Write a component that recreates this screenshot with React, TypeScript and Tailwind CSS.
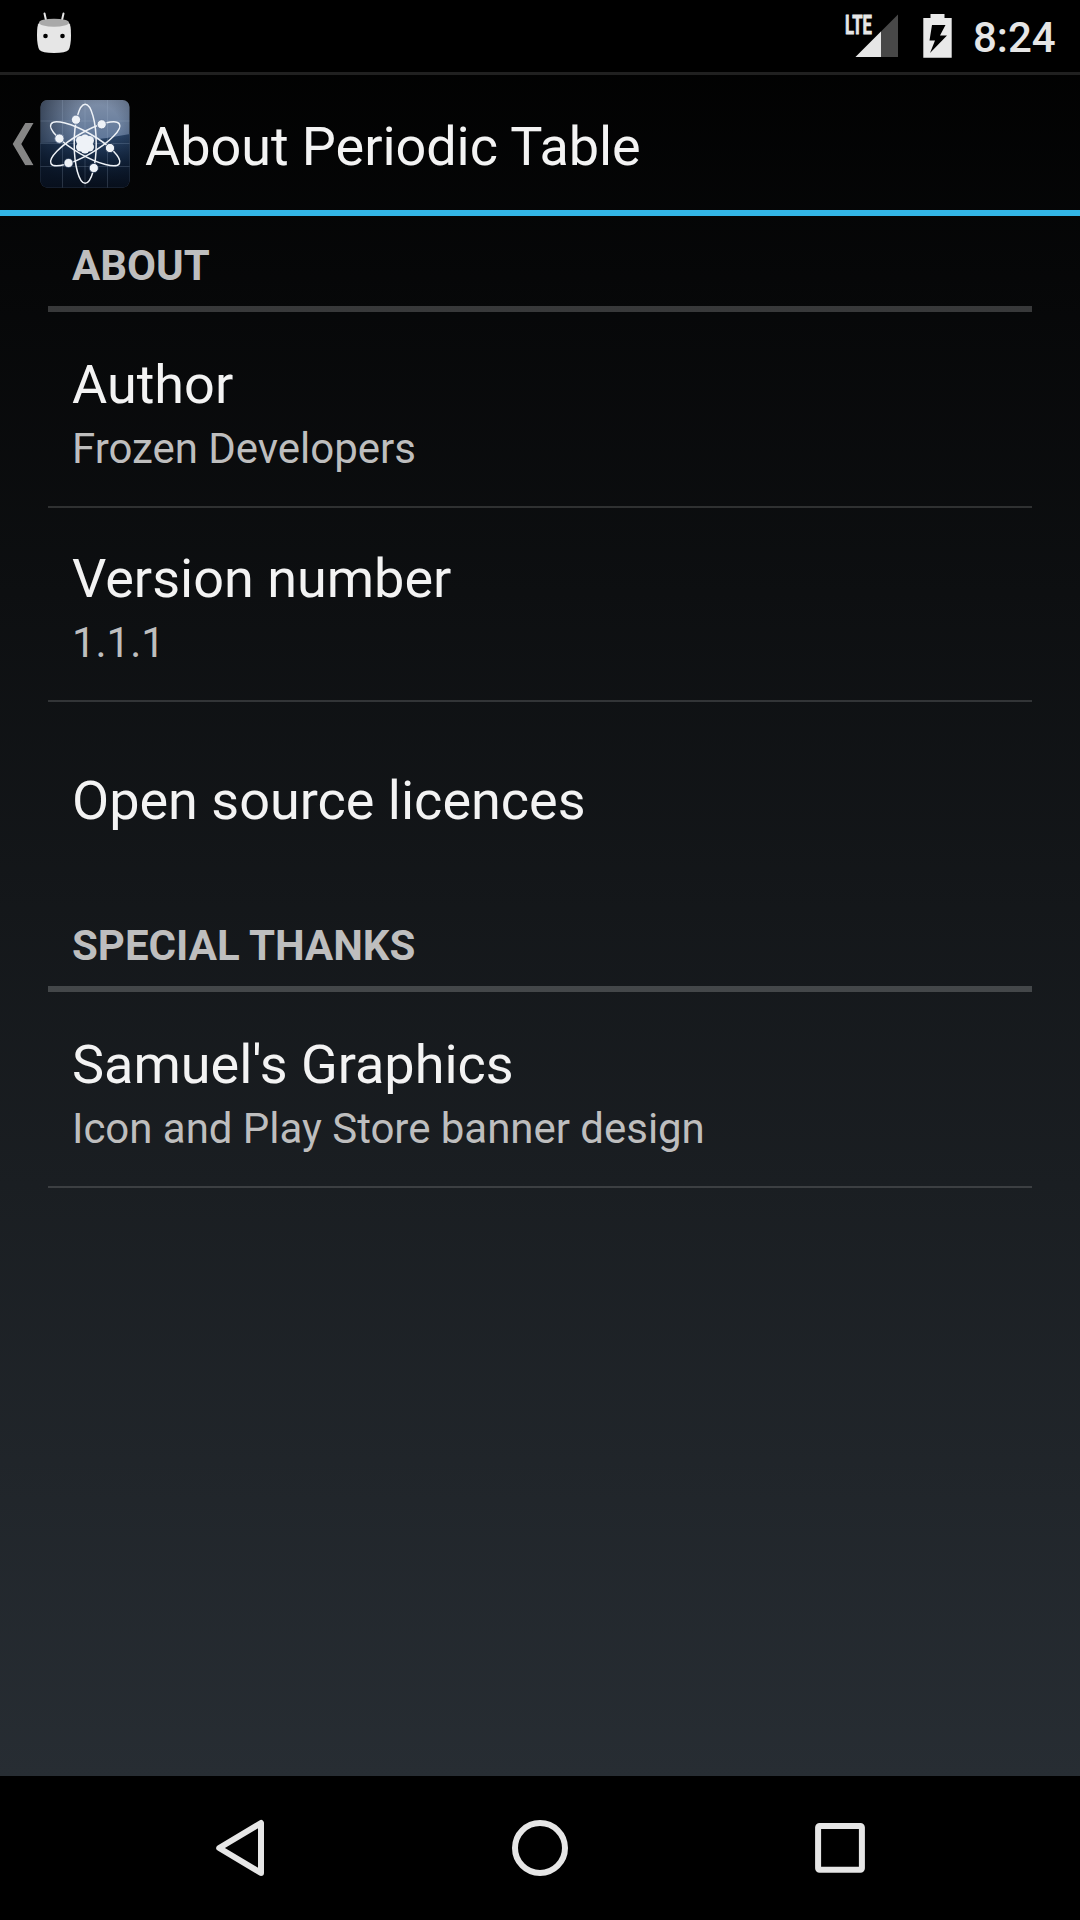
import React from "react";

function StatusBar() {
  return (
    <div className="flex h-[72px] items-center bg-black text-[#e6e6e6]">
      <svg className="ml-[36px] h-[42px] w-[36px] -translate-y-[3px]" viewBox="36 12 36 42">
        <path d="M44.500 13.500 46.300 21.500M63.500 13.500 61.700 21.500" stroke="#e6e6e6" strokeWidth="2" strokeLinecap="round" />
        <path d="M39 23Q37 24.500 37 35Q37 46 39.500 50Q42 53 54 53Q66 53 68.500 50Q71 46 71 35Q71 24.500 69 23Z" fill="#e6e6e6" />
        <ellipse cx="54" cy="22.7" rx="15" ry="4" fill="#a9a9a9" />
        <circle cx="45.5" cy="36" r="2.3" />
        <circle cx="62.5" cy="36" r="2.3" />
      </svg>
      <div className="relative ml-auto h-[72px] w-[53px]">
        <svg className="h-[72px] w-[53px]" viewBox="845 0 53 72">
          <path d="M855.500 57 898 14.500V57Z" fill="#484848" />
          <path d="M855.500 57 881 31.500V57Z" fill="#e6e6e6" />
        </svg>
        <span className="absolute left-0 top-[12px] origin-left scale-x-[0.64] text-[26px] font-bold leading-[26px] [-webkit-text-stroke:0.8px_#e6e6e6]">LTE</span>
      </div>
      <svg className="ml-[25px] h-[72px] w-[29px]" viewBox="923 0 29 72">
        <path d="M930.500 14H944.500V18H951.700V57.700H923.300V18H930.500Z" fill="#e9e9e9" />
        <path d="M932 25H945.500L940 35.500H947L930 53L935 40.500H929.500Z" fill="#000" />
      </svg>
      <span className="ml-[21px] w-[107px] translate-y-[2px] whitespace-nowrap text-[42px] font-medium leading-[72px]">8:24</span>
    </div>
  );
}

function AtomIcon() {
  const orbits = [0, 60, 120];
  return (
    <svg className="ml-[6px] h-[90px] w-[90px] translate-y-[2px]" viewBox="0 0 90 90">
      <defs>
        <linearGradient id="sky" x1="0" y1="0" x2="0" y2="1">
          <stop offset="0" stopColor="#7f8fa8" />
          <stop offset="0.45" stopColor="#5f7799" />
          <stop offset="1" stopColor="#5f7799" />
        </linearGradient>
        <linearGradient id="ground" x1="0" y1="0" x2="0" y2="1">
          <stop offset="0" stopColor="#2c4669" />
          <stop offset="0.5" stopColor="#132742" />
          <stop offset="1" stopColor="#060c17" />
        </linearGradient>
        <radialGradient id="shade" cx="0.65" cy="0.3" r="0.8">
          <stop offset="0.3" stopColor="#08111f" stopOpacity="0" />
          <stop offset="1" stopColor="#08111f" stopOpacity="0.7" />
        </radialGradient>
        <clipPath id="tile">
          <rect x="0.500" y="0" width="89" height="87.500" rx="7" />
        </clipPath>
      </defs>
      <g clipPath="url(#tile)">
        <rect width="90" height="88" fill="url(#sky)" />
        <path d="M0 43Q50 42 90 34V88H0Z" fill="url(#ground)" />
        <rect width="90" height="88" fill="url(#shade)" />
        <path d="M22.500 0V88M45 0V88M67.500 0V88M0 21H90M0 43.500H90M0 66.500H90" stroke="#a9bdd5" strokeOpacity="0.2" />
      </g>
      <g fill="none" stroke="#eef2f7" strokeWidth="1.5">
        {orbits.map((angle) => (
          <ellipse key={angle} cx="45.2" cy="43.8" rx="11" ry="39.5" transform={`rotate(${angle} 45.2 43.8)`} />
        ))}
      </g>
      <g fill="#eef2f7" stroke="#5b6f8e" strokeWidth="0.8">
        <circle cx="36" cy="19.700" r="4.600" />
        <circle cx="61.700" cy="24.300" r="4.600" />
        <circle cx="19.400" cy="38.600" r="4.600" />
      </g>
      <g fill="#eef2f7" stroke="#1b2f4c" strokeWidth="0.8">
        <circle cx="70" cy="48" r="4.600" />
        <circle cx="28.500" cy="63" r="4.600" />
        <circle cx="53.800" cy="68" r="4.600" />
      </g>
      <g fill="#eef2f7">
        <circle cx="45" cy="39" r="4.500" />
        <circle cx="40.500" cy="40.500" r="4.500" />
        <circle cx="49.500" cy="40.500" r="4.500" />
        <circle cx="40.500" cy="47" r="4.500" />
        <circle cx="49.500" cy="47" r="4.500" />
        <circle cx="45" cy="49" r="4.500" />
        <circle cx="45" cy="44" r="6" />
      </g>
    </svg>
  );
}

function ActionBar() {
  return (
    <header className="flex h-[144px] items-center border-b-[6px] border-t-[3px] border-b-[#33b5e5] border-t-[#202020]">
      <svg className="ml-[12px] h-[43px] w-[22px] translate-y-[1.5px]" viewBox="0 0 22 43">
        <path d="M13.300 0.500H21.500L9.300 21.500L21.500 42.800H13.300L0.700 21.500Z" fill="#868686" />
      </svg>
      <AtomIcon />
      <h1 className="ml-[15px] translate-y-[4px] whitespace-nowrap text-[54px] leading-[64px] tracking-[-0.05px]">About Periodic Table</h1>
    </header>
  );
}

function SectionHeader({ title }: { title: string }) {
  return (
    <h2 className="mb-[2px] flex h-[96px] items-end border-b-[6px] border-white/20 pb-[15px] pl-[24px] text-[42px] font-bold leading-[50px] text-[#bebebe]">
      {title}
    </h2>
  );
}

function Preference({ title, summary }: { title: string; summary?: string }) {
  return (
    <div className="flex h-[192px] flex-col justify-center pl-[24px] pt-[6px]">
      <div className="whitespace-nowrap text-[54px] leading-[72px]">{title}</div>
      {summary && <div className="whitespace-nowrap text-[42px] leading-[56px] tracking-[-0.03px] text-[#bebebe]">{summary}</div>}
    </div>
  );
}

function Divider() {
  return <div className="h-[2px] bg-white/15" />;
}

function NavigationBar() {
  return (
    <nav className="flex h-[144px] items-center justify-center gap-[156px] bg-black">
      <svg className="h-[144px] w-[144px]" viewBox="0 0 144 144" fill="none" stroke="#e6e6e6" strokeWidth="6" strokeLinejoin="round">
        <path d="M93 47V97L51.200 72Z" />
      </svg>
      <svg className="h-[144px] w-[144px]" viewBox="0 0 144 144" fill="none" stroke="#e6e6e6" strokeWidth="6">
        <circle cx="72" cy="72" r="25" />
      </svg>
      <svg className="h-[144px] w-[144px]" viewBox="0 0 144 144" fill="none" stroke="#e6e6e6" strokeWidth="6">
        <rect x="50.100" y="50" width="43.800" height="43.700" rx="1.500" />
      </svg>
    </nav>
  );
}

export default function App() {
  return (
    <div className="flex h-[1920px] w-[1080px] flex-col overflow-hidden bg-[linear-gradient(to_bottom,#000_0px,#272d33_1776px)] font-[Roboto,sans-serif] text-[#f3f3f3]">
      <StatusBar />
      <ActionBar />
      <main className="flex-1 px-[48px]">
        <SectionHeader title="ABOUT" />
        <Preference title="Author" summary="Frozen Developers" />
        <Divider />
        <Preference title="Version number" summary="1.1.1" />
        <Divider />
        <Preference title="Open source licences" />
        <div className="h-[2px]" />
        <SectionHeader title="SPECIAL THANKS" />
        <Preference title="Samuel's Graphics" summary="Icon and Play Store banner design" />
        <Divider />
      </main>
      <NavigationBar />
    </div>
  );
}
